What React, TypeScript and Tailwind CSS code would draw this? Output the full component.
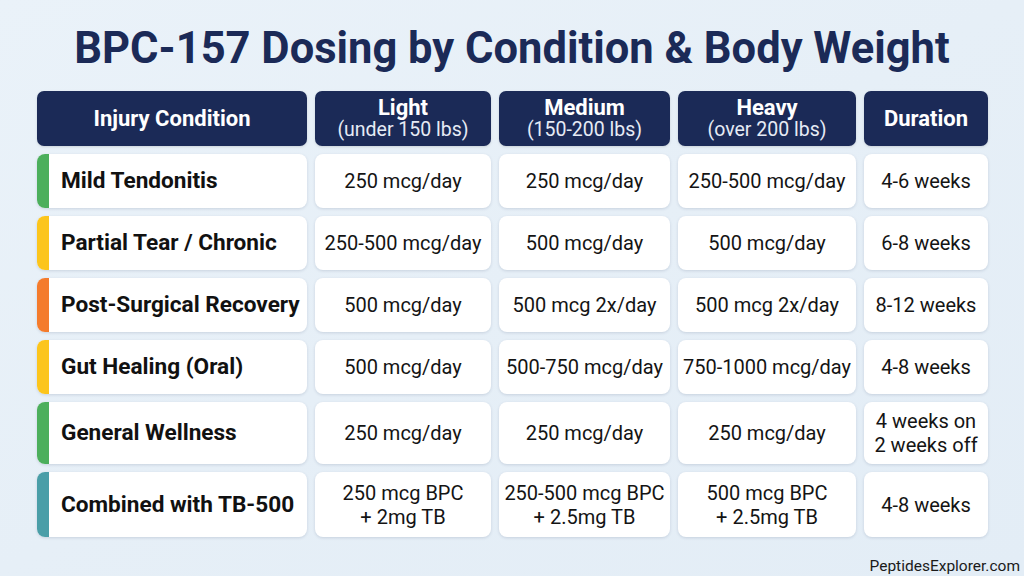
import React from "react";

type Row = {
  label: string;
  color: string;
  light: string[];
  medium: string[];
  heavy: string[];
  duration: string[];
};

const rows: Row[] = [
  { label: "Mild Tendonitis", color: "bg-[#4caf5c]", light: ["250 mcg/day"], medium: ["250 mcg/day"], heavy: ["250-500 mcg/day"], duration: ["4-6 weeks"] },
  { label: "Partial Tear / Chronic", color: "bg-[#fcc51c]", light: ["250-500 mcg/day"], medium: ["500 mcg/day"], heavy: ["500 mcg/day"], duration: ["6-8 weeks"] },
  { label: "Post-Surgical Recovery", color: "bg-[#f47b2c]", light: ["500 mcg/day"], medium: ["500 mcg 2x/day"], heavy: ["500 mcg 2x/day"], duration: ["8-12 weeks"] },
  { label: "Gut Healing (Oral)", color: "bg-[#fcc51c]", light: ["500 mcg/day"], medium: ["500-750 mcg/day"], heavy: ["750-1000 mcg/day"], duration: ["4-8 weeks"] },
  { label: "General Wellness", color: "bg-[#4caf5c]", light: ["250 mcg/day"], medium: ["250 mcg/day"], heavy: ["250 mcg/day"], duration: ["4 weeks on", "2 weeks off"] },
  { label: "Combined with TB-500", color: "bg-[#4a9ea8]", light: ["250 mcg BPC", "+ 2mg TB"], medium: ["250-500 mcg BPC", "+ 2.5mg TB"], heavy: ["500 mcg BPC", "+ 2.5mg TB"], duration: ["4-8 weeks"] },
];

function Header({ title, sub }: { title: string; sub?: string }) {
  return (
    <div className="bg-[#1b2a57] rounded-[7px] flex flex-col items-center justify-center text-white shadow-sm">
      <div className="text-[22px] font-bold leading-[22px]">{title}</div>
      {sub && <div className="text-[19.5px] leading-[22px] text-[#e6ebf5]">{sub}</div>}
    </div>
  );
}

function Value({ lines }: { lines: string[] }) {
  return (
    <div className="bg-white rounded-[8px] flex flex-col items-center justify-center text-[#141414] text-[20px] leading-[24px] shadow-[0_1px_3px_rgba(30,50,90,0.15)]">
      {lines.map((l) => (
        <div key={l}>{l}</div>
      ))}
    </div>
  );
}

export default function App() {
  return (
    <div
      className="w-[1024px] h-[576px] overflow-hidden bg-gradient-to-br from-[#eaf2f9] via-[#e6eff7] to-[#e3edf6] flex flex-col"
      style={{ fontFamily: "Roboto, 'Noto Sans', sans-serif" }}
    >
      <h1 className="pt-[27px] h-[71px] text-center text-[43.5px] leading-[44px] font-bold text-[#1b2a57]">
        BPC-157 Dosing by Condition &amp; Body Weight
      </h1>
      <div className="mt-[20px] ml-[37px] grid grid-cols-[270px_176px_171px_178px_124px] grid-rows-[55px_54px_54px_54px_54px_62px_65px] gap-[8px]">
        <Header title="Injury Condition" />
        <Header title="Light" sub="(under 150 lbs)" />
        <Header title="Medium" sub="(150-200 lbs)" />
        <Header title="Heavy" sub="(over 200 lbs)" />
        <Header title="Duration" />
        {rows.map((r) => (
          <React.Fragment key={r.label}>
            <div className="bg-white rounded-[8px] overflow-hidden flex items-stretch shadow-[0_1px_3px_rgba(30,50,90,0.15)]">
              <div className={`w-[12px] ${r.color}`} />
              <div className="flex items-center pl-[12px] text-[22.6px] font-bold text-[#111111]">{r.label}</div>
            </div>
            <Value lines={r.light} />
            <Value lines={r.medium} />
            <Value lines={r.heavy} />
            <Value lines={r.duration} />
          </React.Fragment>
        ))}
      </div>
      <div className="flex justify-end pr-[4px] mt-[20px] text-[15.5px] leading-[18px] text-[#1a1a1a]">
        PeptidesExplorer.com
      </div>
    </div>
  );
}
